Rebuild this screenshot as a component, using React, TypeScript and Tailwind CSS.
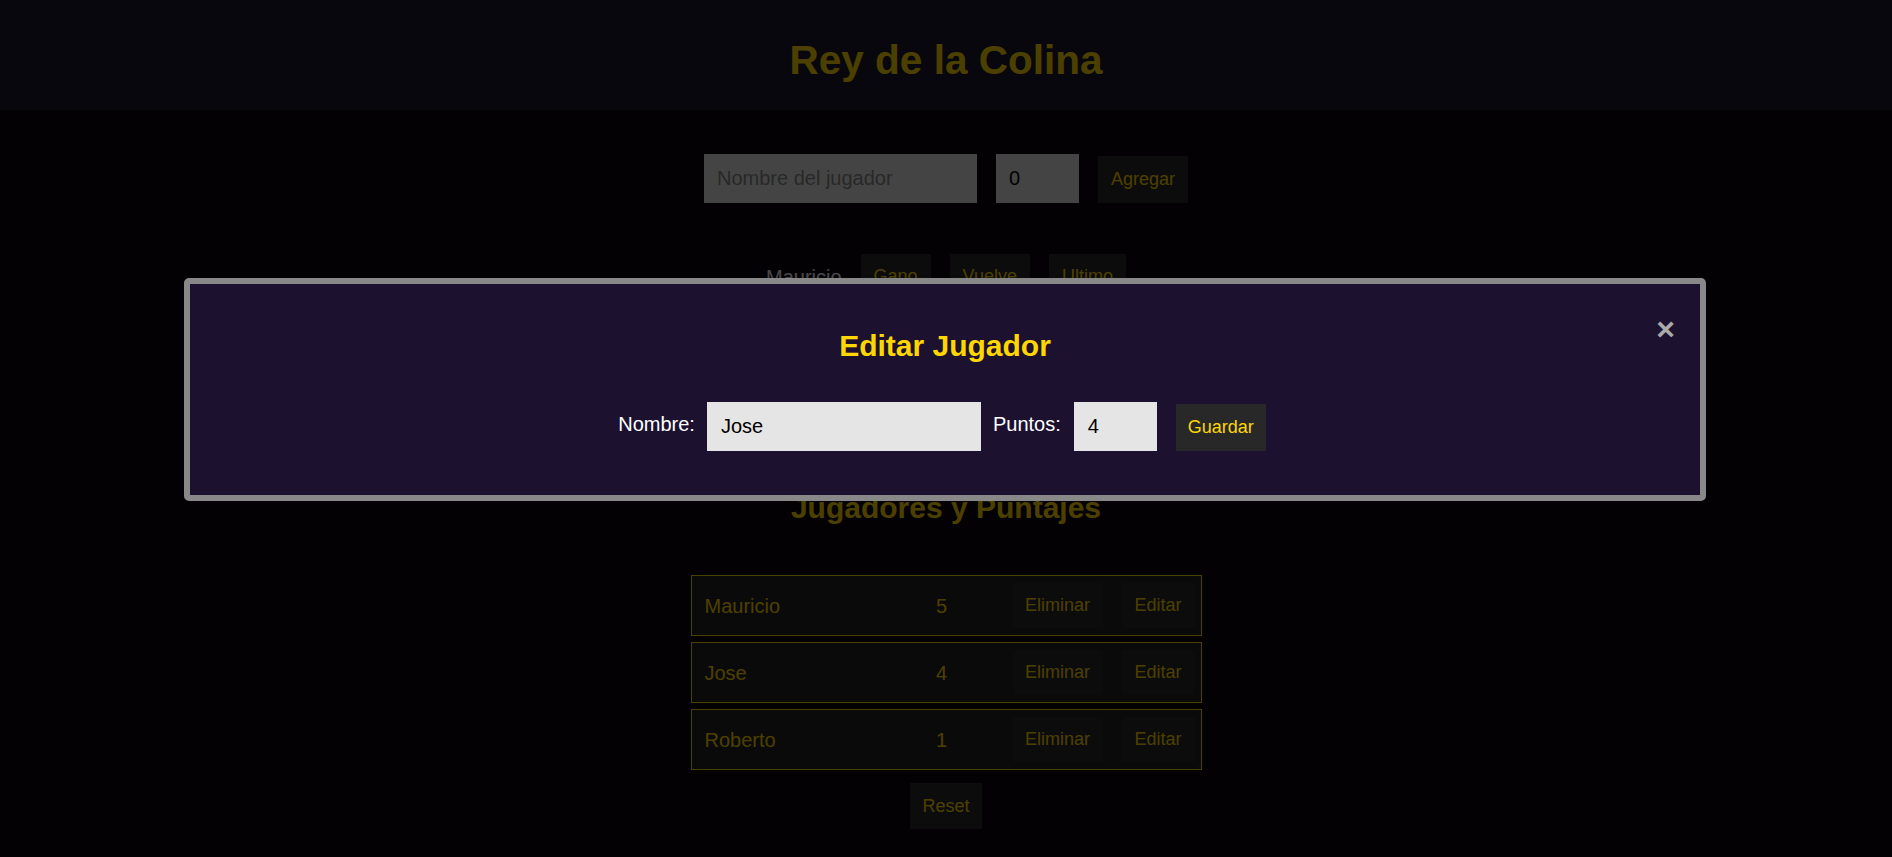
import { useState } from "react";

const players = [
  { name: "Mauricio", points: 5 },
  { name: "Jose", points: 4 },
  { name: "Roberto", points: 1 },
];

export default function App() {
  const [open, setOpen] = useState(true);

  return (
    <div className="min-h-screen bg-[#0f050f] font-['Liberation_Sans',Arial,sans-serif] text-white">
      <header className="h-[110px] bg-[#1a1a2e] pt-[37px]">
        <h1 className="text-center text-[40.5px] font-bold leading-[47px] text-[#ffd700]">Rey de la Colina</h1>
      </header>

      <main className="flex flex-col items-center">
        {/* Add player */}
        <div className="mt-[44px] flex items-end gap-[19px]">
          <input
            placeholder="Nombre del jugador"
            className="h-[49px] w-[273px] bg-[#e5e5e5] px-[13px] text-[20px] text-black outline-none placeholder:text-[#888]"
          />
          <input
            defaultValue="0"
            className="h-[49px] w-[83px] bg-[#e5e5e5] px-[13px] text-[20px] text-black outline-none"
          />
          <button className="h-[47px] bg-[#282828] px-[13px] text-[18px] text-[#ffd700]">Agregar</button>
        </div>

        {/* Current match */}
        <div className="mt-[51px] flex items-center gap-[19px]">
          <span className="text-[20px] text-[#f0f0ff]">Mauricio</span>
          <button className="h-[45px] bg-[#282828] px-[13px] text-[18px] text-[#ffd700]">Gano</button>
          <button className="h-[45px] bg-[#282828] px-[13px] text-[18px] text-[#ffd700]">Vuelve</button>
          <button className="h-[45px] bg-[#282828] px-[13px] text-[18px] text-[#ffd700]">Ultimo</button>
        </div>

        <h2 className="mt-[191px] h-[35px] text-[30px] font-bold leading-[35px] text-[#ffd700]">Jugadores y Puntajes</h2>

        {/* Score list */}
        <div className="mt-[50px] flex w-[511px] flex-col gap-[6px]">
          {players.map((p) => (
            <div
              key={p.name}
              className="flex items-center border border-[#ffd700] bg-[#222] py-[7px] pl-[13px] pr-[6px] text-[20px] text-[#ffd700]"
            >
              <span className="flex-1">{p.name}</span>
              <span className="w-[100px] text-center">{p.points}</span>
              <button className="ml-[21px] h-[45px] w-[90px] bg-[#282828] text-[18px]">Eliminar</button>
              <button className="ml-[19px] h-[45px] w-[73px] bg-[#282828] text-[18px]">Editar</button>
            </div>
          ))}
        </div>

        <button className="mt-[13px] h-[46px] w-[72px] bg-[#282828] text-[18px] text-[#ffd700]">Reset</button>
      </main>

      {open && (
        <>
          <div className="fixed inset-0 bg-black/70" />
          <div className="fixed left-[184px] top-[278px] w-[1522px] rounded-[5px] border-[6px] border-[#888] bg-[#1c1230] pb-[44px] pt-[45px]">
            <button
              onClick={() => setOpen(false)}
              className="absolute right-[25px] top-[29px] text-[32px] font-bold leading-none text-[#aaa]"
            >
              ×
            </button>
            <h2 className="text-center text-[30px] font-bold leading-[34px] text-[#ffd700]">Editar Jugador</h2>
            <div className="mt-[39px] flex items-end justify-center pr-[6px]">
              <label className="mb-[12px] mr-[12px] text-[20px] text-white">Nombre:</label>
              <input
                defaultValue="Jose"
                className="h-[49px] w-[274px] bg-[#e5e5e5] px-[14px] text-[20px] text-black outline-none"
              />
              <label className="mb-[12px] ml-[12px] mr-[13px] text-[20px] text-white">Puntos:</label>
              <input
                defaultValue="4"
                className="h-[49px] w-[83px] bg-[#e5e5e5] px-[14px] text-[20px] text-black outline-none"
              />
              <button className="ml-[19px] h-[47px] w-[90px] bg-[#282828] text-[18px] text-[#ffd700]">Guardar</button>
            </div>
          </div>
        </>
      )}
    </div>
  );
}
